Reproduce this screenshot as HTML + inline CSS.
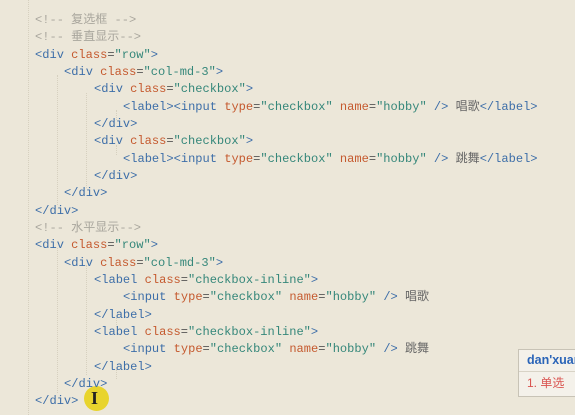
<html><head><style>
body{margin:0;width:575px;height:415px;background:#ece7d9;overflow:hidden;position:relative;font-family:"Liberation Mono","Noto Sans CJK SC",monospace;font-size:12.05px}
.l{position:absolute;white-space:pre;height:17px;line-height:17px}
.t{color:#3d6ea8}.a{color:#c55a2f}.s{color:#35877a}.c{color:#a9a69d}.x{color:#666}.p{color:#555}
.g{position:absolute;top:0;height:415px;border-left:1px dotted #d6d0bf}
</style></head><body>
<div class="g" style="left:28px"></div><div class="g" style="left:57px;top:75px;height:130px"></div><div class="g" style="left:57px;top:248px;height:145px"></div>
<div class="g" style="left:86px;top:93px;height:95px"></div><div class="g" style="left:86px;top:265px;height:110px"></div>
<div class="g" style="left:116px;top:110px;height:10px"></div><div class="g" style="left:116px;top:145px;height:10px"></div><div class="g" style="left:116px;top:317px;height:10px"></div><div class="g" style="left:116px;top:369px;height:10px"></div>
<div class="l c" style="left:35px;top:12px">&lt;!-- 复选框 --&gt;</div>
<div class="l c" style="left:35px;top:29px">&lt;!-- 垂直显示--&gt;</div>
<div class="l" style="left:35px;top:47px"><span class="t">&lt;div</span> <span class="a">class</span><span class="p">=</span><span class="s">"row"</span><span class="t">&gt;</span></div>
<div class="l" style="left:64px;top:64px"><span class="t">&lt;div</span> <span class="a">class</span><span class="p">=</span><span class="s">"col-md-3"</span><span class="t">&gt;</span></div>
<div class="l" style="left:94px;top:81px"><span class="t">&lt;div</span> <span class="a">class</span><span class="p">=</span><span class="s">"checkbox"</span><span class="t">&gt;</span></div>
<div class="l" style="left:123px;top:99px"><span class="t">&lt;label&gt;&lt;input</span> <span class="a">type</span><span class="p">=</span><span class="s">"checkbox"</span> <span class="a">name</span><span class="p">=</span><span class="s">"hobby"</span> <span class="t">/&gt;</span> <span class="x">唱歌</span><span class="t">&lt;/label&gt;</span></div>
<div class="l t" style="left:94px;top:116px">&lt;/div&gt;</div>
<div class="l" style="left:94px;top:133px"><span class="t">&lt;div</span> <span class="a">class</span><span class="p">=</span><span class="s">"checkbox"</span><span class="t">&gt;</span></div>
<div class="l" style="left:123px;top:151px"><span class="t">&lt;label&gt;&lt;input</span> <span class="a">type</span><span class="p">=</span><span class="s">"checkbox"</span> <span class="a">name</span><span class="p">=</span><span class="s">"hobby"</span> <span class="t">/&gt;</span> <span class="x">跳舞</span><span class="t">&lt;/label&gt;</span></div>
<div class="l t" style="left:94px;top:168px">&lt;/div&gt;</div>
<div class="l t" style="left:64px;top:185px">&lt;/div&gt;</div>
<div class="l t" style="left:35px;top:203px">&lt;/div&gt;</div>
<div class="l c" style="left:35px;top:220px">&lt;!-- 水平显示--&gt;</div>
<div class="l" style="left:35px;top:237px"><span class="t">&lt;div</span> <span class="a">class</span><span class="p">=</span><span class="s">"row"</span><span class="t">&gt;</span></div>
<div class="l" style="left:64px;top:255px"><span class="t">&lt;div</span> <span class="a">class</span><span class="p">=</span><span class="s">"col-md-3"</span><span class="t">&gt;</span></div>
<div class="l" style="left:94px;top:272px"><span class="t">&lt;label</span> <span class="a">class</span><span class="p">=</span><span class="s">"checkbox-inline"</span><span class="t">&gt;</span></div>
<div class="l" style="left:123px;top:289px"><span class="t">&lt;input</span> <span class="a">type</span><span class="p">=</span><span class="s">"checkbox"</span> <span class="a">name</span><span class="p">=</span><span class="s">"hobby"</span> <span class="t">/&gt;</span> <span class="x">唱歌</span></div>
<div class="l t" style="left:94px;top:307px">&lt;/label&gt;</div>
<div class="l" style="left:94px;top:324px"><span class="t">&lt;label</span> <span class="a">class</span><span class="p">=</span><span class="s">"checkbox-inline"</span><span class="t">&gt;</span></div>
<div class="l" style="left:123px;top:341px"><span class="t">&lt;input</span> <span class="a">type</span><span class="p">=</span><span class="s">"checkbox"</span> <span class="a">name</span><span class="p">=</span><span class="s">"hobby"</span> <span class="t">/&gt;</span> <span class="x">跳舞</span></div>
<div class="l t" style="left:94px;top:359px">&lt;/label&gt;</div>
<div style="position:absolute;left:84px;top:386px;width:25px;height:25px;border-radius:50%;background:#e8d21a;opacity:.9"></div>
<div class="l t" style="left:64px;top:376px">&lt;/div&gt;</div>
<div class="l t" style="left:35px;top:393px">&lt;/div&gt;</div>
<div style="position:absolute;left:91px;top:388px;font:bold 18px 'Liberation Serif',serif;color:#222">I</div>
<div style="position:absolute;left:518px;top:349px;width:70px;height:46px;background:#f4f1ea;border:1px solid #c8c3b6;font-family:'Liberation Sans','Noto Sans CJK SC',sans-serif">
<div style="height:21px;line-height:21px;padding-left:8px;color:#2a64b8;font-weight:bold;font-size:12.5px;border-bottom:1px solid #d8d3c6;white-space:nowrap">dan'xuan</div>
<div style="line-height:22px;padding-left:8px;color:#d9534f;font-size:12px">1. 单选</div></div>
</body></html>
